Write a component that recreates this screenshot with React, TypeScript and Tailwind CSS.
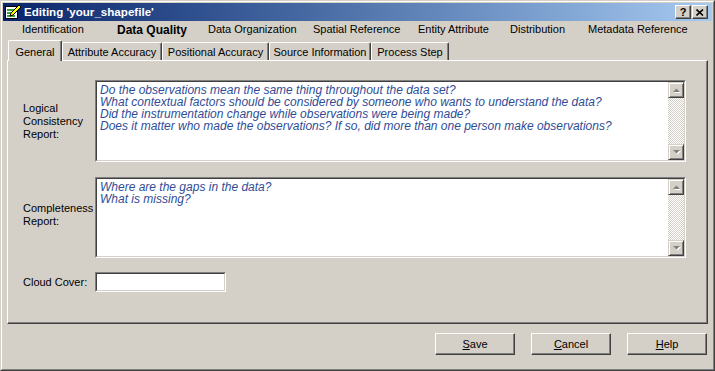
import React from 'react';

const navItems = [
  { label: 'Identification', w: 'w-[95px]' },
  { label: 'Data Quality', w: 'w-[91px]', bold: true },
  { label: 'Data Organization', w: 'w-[105px]' },
  { label: 'Spatial Reference', w: 'w-[105px]' },
  { label: 'Entity Attribute', w: 'w-[92px]' },
  { label: 'Distribution', w: 'w-[78px]' },
  { label: 'Metadata Reference', w: 'w-[110px]' },
];

const tabs = [
  { label: 'General', w: 'w-[54px]', active: true },
  { label: 'Attribute Accuracy', w: 'w-[100px]' },
  { label: 'Positional Accuracy', w: 'w-[107px]' },
  { label: 'Source Information', w: 'w-[102px]' },
  { label: 'Process Step', w: 'w-[78px]' },
];

const ArrowBtn = ({ up }: { up?: boolean }) => (
  <div className="w-[16px] h-[16px] flex items-center justify-center bg-[#d4d0c8] border border-t-[#d4d0c8] border-l-[#d4d0c8] border-r-[#404040] border-b-[#404040] shadow-[inset_1px_1px_#fff,inset_-1px_-1px_#808080]">
    <svg width="9" height="6" viewBox="0 0 9 6">
      {up ? (
        <>
          <path d="M1 5h7L4.5 1.5z" fill="#fff" transform="translate(1 1)" />
          <path d="M1 5h7L4.5 1.5z" fill="#808080" />
        </>
      ) : (
        <>
          <path d="M1 1h7L4.5 4.5z" fill="#fff" transform="translate(1 1)" />
          <path d="M1 1h7L4.5 4.5z" fill="#808080" />
        </>
      )}
    </svg>
  </div>
);

const TextBox = ({ lines, h }: { lines: string[]; h: string }) => (
  <div className={`w-[591px] ${h} border border-t-[#808080] border-l-[#808080] border-r-white border-b-white`}>
    <div className="h-full flex bg-white border border-t-[#404040] border-l-[#404040] border-r-[#d4d0c8] border-b-[#d4d0c8]">
      <div className="flex-1 pl-[3px] pt-[2px] italic text-[12px] leading-[12px] text-[#2f4d97]">
        {lines.map((l) => (
          <div key={l}>{l}</div>
        ))}
      </div>
      <div className="w-[16px] flex flex-col bg-[repeating-conic-gradient(#ffffff_0%_25%,#d4d0c8_0%_50%)] bg-[length:2px_2px]">
        <ArrowBtn up />
        <div className="flex-1" />
        <ArrowBtn />
      </div>
    </div>
  </div>
);

const Button = ({ children }: { children: React.ReactNode }) => (
  <div className="w-[80px] h-[22px] flex items-center justify-center bg-[#d4d0c8] border border-t-white border-l-white border-r-[#404040] border-b-[#404040] shadow-[inset_-1px_-1px_#808080]">
    {children}
  </div>
);

export default function App() {
  return (
    <div className="w-[715px] h-[371px] bg-[#d4d0c8] text-black text-[11px] font-['Liberation_Sans',Arial,sans-serif]">
      <div className="h-full border border-t-[#d4d0c8] border-l-[#d4d0c8] border-r-[#404040] border-b-[#404040]">
        <div className="h-full flex flex-col p-px border border-t-white border-l-white border-r-[#808080] border-b-[#808080]">
          {/* Title bar */}
          <div className="h-[18px] flex items-center bg-linear-to-r from-[#0a246a] to-[#a6caf0] pl-[2px] pr-[4px]">
            <svg width="16" height="16" viewBox="0 0 16 16">
              <rect x="0.5" y="2.5" width="12" height="12" fill="#fff" stroke="#000" />
              <path d="M2 6h8M2 9h7M2 12h8" stroke="#008000" strokeWidth="1.5" />
              <path d="M14 1l2 2-8 8-3 1 1-3z" fill="#ffff00" stroke="#000" strokeWidth="1" />
            </svg>
            <span className="ml-[3px] text-white font-bold text-[11.6px]">Editing 'your_shapefile'</span>
            <div className="ml-auto flex">
              <div className="w-[16px] h-[14px] flex items-center justify-center bg-[#d4d0c8] border border-t-white border-l-white border-r-[#404040] border-b-[#404040] shadow-[inset_-1px_-1px_#808080] font-bold text-[11px] leading-none">
                ?
              </div>
              <div className="w-[16px] h-[14px] ml-[1px] flex items-center justify-center bg-[#d4d0c8] border border-t-white border-l-white border-r-[#404040] border-b-[#404040] shadow-[inset_-1px_-1px_#808080]">
                <svg width="8" height="7" viewBox="0 0 8 7">
                  <path d="M0.5 0.5l6.5 6M7 0.5l-6.5 6" stroke="#000" strokeWidth="1.6" />
                </svg>
              </div>
            </div>
          </div>

          {/* Top section labels */}
          <div className="h-[19px] flex items-center pl-[19px] pb-[2px]">
            {navItems.map((n) => (
              <span key={n.label} className={`${n.w} shrink-0 ${n.bold ? 'font-bold text-[12px]' : ''}`}>
                {n.label}
              </span>
            ))}
          </div>

          {/* Sub tabs */}
          <div className="h-[20px] flex items-end pl-[5px] relative z-10">
            {tabs.map((t) =>
              t.active ? (
                <div
                  key={t.label}
                  className={`${t.w} h-[21px] -mb-[1px] pt-[2px] flex items-center justify-center bg-[#d4d0c8] border-l border-t border-white border-r border-r-[#404040] shadow-[inset_-1px_0_#808080] rounded-t-[2px]`}
                >
                  {t.label}
                </div>
              ) : (
                <div
                  key={t.label}
                  className={`${t.w} h-[18px] pt-[1px] flex items-center justify-center bg-[#d4d0c8] border-l border-t border-white border-r border-r-[#404040] shadow-[inset_-1px_0_#808080] rounded-t-[2px]`}
                >
                  {t.label}
                </div>
              )
            )}
          </div>

          {/* Panel */}
          <div className="mx-[4px] h-[264px] border border-t-white border-l-white border-r-[#404040] border-b-[#404040] shadow-[inset_-1px_-1px_#808080] pl-[15px] pt-[19px]">
            <div className="flex items-center">
              <div className="w-[72px] leading-[13px]">
                Logical
                <br />
                Consistency
                <br />
                Report:
              </div>
              <TextBox
                h="h-[82px]"
                lines={[
                  'Do the observations mean the same thing throughout the data set?',
                  'What contextual factors should be considered by someone who wants to understand the data?',
                  'Did the instrumentation change while observations were being made?',
                  'Does it matter who made the observations? If so, did more than one person make observations?',
                ]}
              />
            </div>
            <div className="flex items-center mt-[15px]">
              <div className="w-[72px] leading-[13px] pb-[6px]">
                Completeness
                <br />
                Report:
              </div>
              <TextBox h="h-[81px]" lines={['Where are the gaps in the data?', 'What is missing?']} />
            </div>
            <div className="flex items-center mt-[14px]">
              <div className="w-[72px]">Cloud Cover:</div>
              <div className="w-[131px] h-[20px] border border-t-[#808080] border-l-[#808080] border-r-white border-b-white">
                <div className="h-full bg-white border border-t-[#404040] border-l-[#404040] border-r-[#d4d0c8] border-b-[#d4d0c8]" />
              </div>
            </div>
          </div>

          {/* Buttons */}
          <div className="mt-[9px] flex justify-end gap-[16px] pr-[5px]">
            <Button>
              <span>
                <u>S</u>ave
              </span>
            </Button>
            <Button>
              <span>
                <u>C</u>ancel
              </span>
            </Button>
            <Button>
              <span>
                <u>H</u>elp
              </span>
            </Button>
          </div>
        </div>
      </div>
    </div>
  );
}
